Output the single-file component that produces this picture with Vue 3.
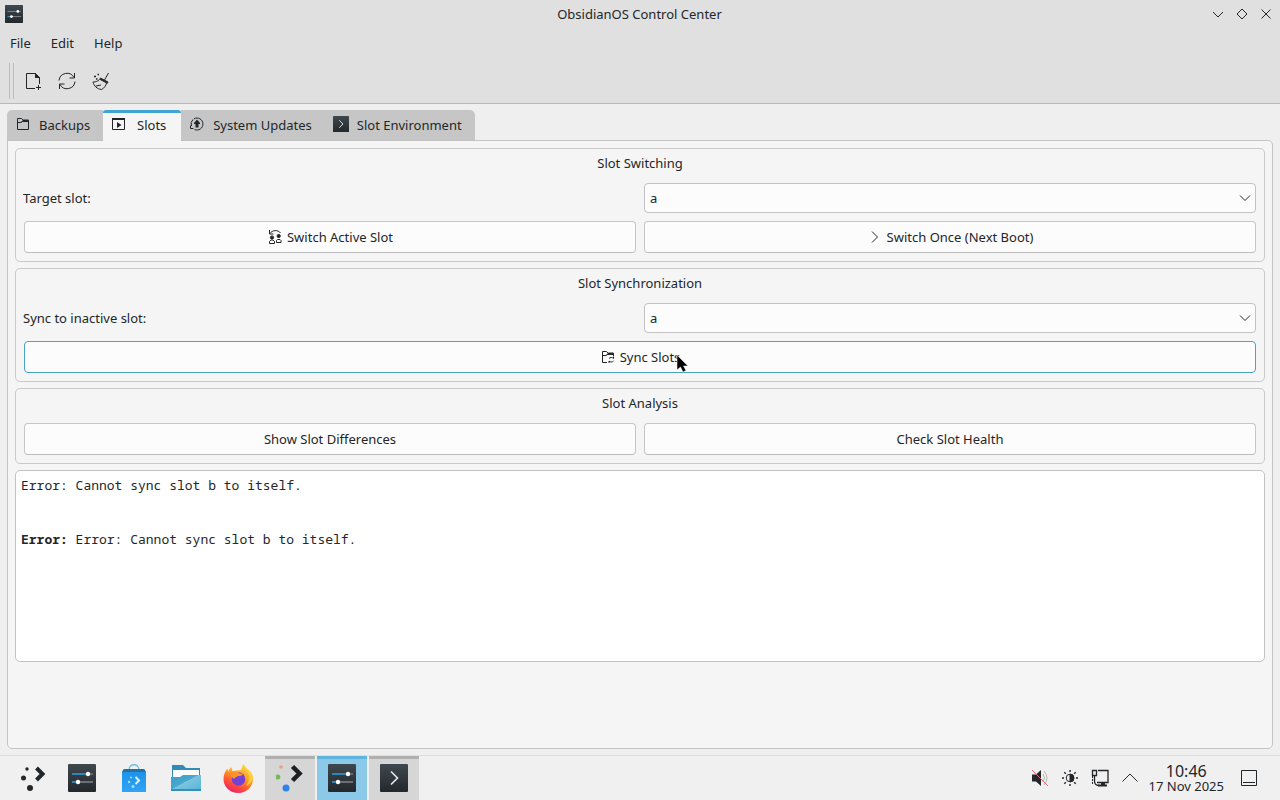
<script setup>
import { ref } from 'vue'

const menus = ['File', 'Edit', 'Help']
const tabs = [
  { id: 'backups', label: 'Backups' },
  { id: 'slots', label: 'Slots' },
  { id: 'updates', label: 'System Updates' },
  { id: 'environment', label: 'Slot Environment' },
]
const activeTab = ref('slots')
const slotNames = ['a', 'b']
const targetSlot = ref('a')
const syncSlot = ref('a')
</script>

<template>
  <div class="desktop">
    <svg class="defs" aria-hidden="true">
      <defs>
        <linearGradient id="dark" x1="0" y1="0" x2="0" y2="1">
          <stop offset="0" stop-color="#3f484f" />
          <stop offset="1" stop-color="#24282c" />
        </linearGradient>
        <linearGradient id="bag" x1="0" y1="0" x2="0" y2="1">
          <stop offset="0" stop-color="#1d8fe8" />
          <stop offset="1" stop-color="#2fa5f5" />
        </linearGradient>
        <linearGradient id="folder" x1="0" y1="0" x2="1" y2="1">
          <stop offset="0" stop-color="#3b9dc6" />
          <stop offset="0.45" stop-color="#48a9cf" />
          <stop offset="0.46" stop-color="#7cc4e0" />
          <stop offset="1" stop-color="#55b3d8" />
        </linearGradient>
        <linearGradient id="fox" x1="0.8" y1="0" x2="0.3" y2="1">
          <stop offset="0" stop-color="#ffe04a" />
          <stop offset="0.45" stop-color="#ff9a22" />
          <stop offset="0.75" stop-color="#ff4a3d" />
          <stop offset="1" stop-color="#e8246f" />
        </linearGradient>
        <symbol id="settings" viewBox="0 0 28 28">
          <rect width="28" height="28" rx="1" fill="url(#dark)" />
          <path d="M4 10h16" stroke="#2f9bd0" stroke-width="1.6" />
          <path d="M20 10h5" stroke="#737b80" stroke-width="1.4" />
          <path d="M4 18h6" stroke="#2f9bd0" stroke-width="1.6" />
          <path d="M10 18h15" stroke="#858c91" stroke-width="1.4" />
          <circle cx="20" cy="10" r="2.2" fill="#fff" />
          <circle cx="10" cy="18" r="2.2" fill="#fff" />
        </symbol>
        <symbol id="terminal" viewBox="0 0 28 28">
          <rect width="28" height="28" rx="1" fill="url(#dark)" />
          <path d="M11 7.500l6.500 6.500-6.500 6.500" fill="none" stroke="#e9ebec" stroke-width="1.600" />
        </symbol>
      </defs>
    </svg>

    <main class="window">
      <header class="header">
        <div class="titlebar">
          <svg class="app-icon" width="18" height="18"><use href="#settings" /></svg>
          <h1>ObsidianOS Control Center</h1>
          <div class="controls">
            <button type="button" aria-label="Minimize">
              <svg width="16" height="16" viewBox="0 0 16 16"><path d="M3 6l5 5 5-5" /></svg>
            </button>
            <button type="button" aria-label="Maximize">
              <svg width="16" height="16" viewBox="0 0 16 16"><path d="M8 3l5 5-5 5-5-5z" /></svg>
            </button>
            <button type="button" aria-label="Close">
              <svg width="16" height="16" viewBox="0 0 16 16"><path d="M3.500 3.500l9 9M12.500 3.500l-9 9" /></svg>
            </button>
          </div>
        </div>
        <nav class="menubar">
          <button v-for="m in menus" :key="m" type="button">{{ m }}</button>
        </nav>
        <div class="toolbar">
          <span class="grip"></span>
          <button type="button" aria-label="New">
            <svg width="22" height="22" viewBox="0 0 22 22"><path d="M13 18.500H4.500v-15h9l4 4V14M13.500 3.500v4h4M16.500 15v5M14 17.500h5" /><path d="M13.500 3.500l4 4h-4z" fill="#232629" /></svg>
          </button>
          <button type="button" aria-label="Refresh">
            <svg width="22" height="22" viewBox="0 0 22 22"><path d="M3 10.500a8 8 0 0 1 15-3M19 11.500a8 8 0 0 1-15 3M18.500 3v5h-5M3.500 19v-5h5" /></svg>
          </button>
          <button type="button" aria-label="Clean up">
            <svg width="22" height="22" viewBox="0 0 22 22"><path d="M18.500 3l-4 7M9.500 9.500c-2 2-4 2.500-6.500 2.500 1 4 4 7 8.500 7.500 3-1.500 4.500-4 5-6.500M6 16l5-1" /><path d="M10.500 8l7.500 4-.7 1.300-7.500-4z" fill="#232629" /><path d="M4 6.500h2M7.500 4.500h1.500M6 9h1.500" stroke-width="1.500" /></svg>
          </button>
        </div>
      </header>

      <div class="body">
        <div class="tabs" role="tablist">
          <button
            v-for="t in tabs"
            :id="'tab-' + t.id"
            :key="t.id"
            type="button"
            role="tab"
            class="tab"
            :class="{ active: activeTab === t.id }"
            :aria-selected="activeTab === t.id"
            @click="activeTab = t.id"
          >
            <svg v-if="t.id === 'backups'" width="16" height="16" viewBox="0 0 16 16"><path d="M2.500 13.500v-11h4l2 2h5v9zM2.500 6.500h4l2-2" /><path d="M6 6l2.500-2.500h5V6z" fill="#232629" stroke="none" /></svg>
            <svg v-else-if="t.id === 'slots'" width="16" height="16" viewBox="0 0 16 16"><path d="M1.500 3v10.500h12V3" /><path d="M1 2h13v2H1zM6 6l4.500 3L6 12z" fill="#232629" stroke="none" /></svg>
            <svg v-else-if="t.id === 'updates'" width="16" height="16" viewBox="0 0 16 16"><path d="M5 2.800a6 6 0 1 1 .5 10.700M4 3.500A6 6 0 0 0 2.500 10M1.500 9.500v3h3" /><path d="M8 3.500l3 3.500v1H9.500v3.500h-3V8H5V7z" fill="#232629" stroke="none" /></svg>
            <svg v-else width="16" height="16"><use href="#terminal" /></svg>
            <span>{{ t.label }}</span>
          </button>
        </div>

        <section class="pane" role="tabpanel" aria-labelledby="tab-slots">
          <section class="group">
            <h2>Slot Switching</h2>
            <div class="grid">
              <label for="target-slot">Target slot:</label>
              <div class="combo">
                <select id="target-slot" v-model="targetSlot">
                  <option v-for="s in slotNames" :key="s">{{ s }}</option>
                </select>
                <svg width="16" height="16" viewBox="0 0 16 16"><path d="M3 5.500l5 5 5-5" /></svg>
              </div>
              <button type="button" class="push">
                <svg width="16" height="16" viewBox="0 0 16 16"><path d="M2.500 1v4h4M3 4.500C5 1 11 .500 13.500 4M2.500 14.500v-2l1.500-1.500h2l1.500 1.500v2zM9.500 13.500v-2l1-1h2.500l1 1v2z" /><circle cx="5" cy="8.500" r="1.600" fill="#232629" /><circle cx="11.700" cy="7" r="1.600" fill="#232629" /></svg>
                <span>Switch Active Slot</span>
              </button>
              <button type="button" class="push">
                <svg width="16" height="16" viewBox="0 0 16 16"><path d="M5 2.500L10.500 8 5 13.500" /></svg>
                <span>Switch Once (Next Boot)</span>
              </button>
            </div>
          </section>

          <section class="group">
            <h2>Slot Synchronization</h2>
            <div class="grid">
              <label for="sync-slot">Sync to inactive slot:</label>
              <div class="combo">
                <select id="sync-slot" v-model="syncSlot">
                  <option v-for="s in slotNames" :key="s">{{ s }}</option>
                </select>
                <svg width="16" height="16" viewBox="0 0 16 16"><path d="M3 5.500l5 5 5-5" /></svg>
              </div>
              <button type="button" class="push wide hovered">
                <svg width="16" height="16" viewBox="0 0 16 16"><path d="M7 13.500H2.500v-11h4l2 2h5V7M2.500 6.500h4l2-2M9 9.500a3 3 0 0 1 4.500 0V7.500M13.500 12a3 3 0 0 1-4.500 0v2" /><path d="M6 6l2.500-2.500h5V6z" fill="#232629" stroke="none" /></svg>
                <span class="pointed">Sync Slots
                  <svg class="cursor" width="14" height="20" viewBox="0 0 14 20"><path d="M1 1v15l3.500-3 2.500 5 3-1.500-2.500-4.500H12z" /></svg>
                </span>
              </button>
            </div>
          </section>

          <section class="group">
            <h2>Slot Analysis</h2>
            <div class="grid">
              <button type="button" class="push">Show Slot Differences</button>
              <button type="button" class="push">Check Slot Health</button>
            </div>
          </section>

          <div class="output" role="log">
            <p>Error: Cannot sync slot b to itself.</p>
            <p><b>Error:</b> Error: Cannot sync slot b to itself.</p>
          </div>
        </section>
      </div>
    </main>

    <footer class="taskbar">
      <button type="button" class="task launcher" aria-label="Application Launcher">
        <svg width="28" height="28" viewBox="0 0 28 28"><g fill="#232629"><circle cx="9" cy="5" r="1.700" /><circle cx="5.500" cy="14" r="2.500" /><circle cx="12" cy="24" r="3" /></g><path d="M18.500 4l6 6-6 6" fill="none" stroke="#232629" stroke-width="4" /></svg>
      </button>
      <button type="button" class="task" aria-label="Control Center">
        <svg width="28" height="28"><use href="#settings" /></svg>
      </button>
      <button type="button" class="task" aria-label="Discover">
        <svg width="28" height="28" viewBox="0 0 28 28"><path d="M9 6c0-7 10-7 10 0" fill="none" stroke="#68bde9" stroke-width="1.300" /><path d="M4 5h20l2 3v20H2V8z" fill="url(#bag)" /><path d="M4 5h20l2 3H2z" fill="#23739f" /><path d="M15.500 13l3.500 3.500-3.500 3.500" fill="none" stroke="#d8f2ff" stroke-width="2" /><g fill="#a6e0ff"><circle cx="11" cy="13.500" r="1" /><circle cx="9" cy="18" r="1.200" /><circle cx="13" cy="22.500" r="1.500" /></g></svg>
      </button>
      <button type="button" class="task" aria-label="Files">
        <svg width="32" height="28" viewBox="0 0 32 28"><path d="M2 1h11l3 3h14v10H2z" fill="#2f8db5" /><path d="M3 6h26v10H3z" fill="#fcfcfc" /><path d="M1 13h9l3-2h18v16H1z" fill="url(#folder)" /><path d="M1 25h30v2H1z" fill="#368fb6" /></svg>
      </button>
      <button type="button" class="task" aria-label="Firefox">
        <svg width="32" height="32" viewBox="0 0 32 32"><path d="M21 2c2 2 3 3 3.500 5C29 9 31 13 31 17.500 30.500 25.500 24 31 16.500 31 8 31 1.500 25 1.500 17c0-4 1.500-8 4-10.500l.5 3L9 5l1.500 4L19 8c1-2 1.500-4 2-6z" fill="url(#fox)" /><circle cx="16.500" cy="17" r="6.800" fill="#7542d8" /><path d="M9 12c2-3 6-3 8-1l4 1c-1 2-3 2-5 2-1 1-3 1-4 3-1-1-3-2-3-5z" fill="#ff9226" /><path d="M21 2c1 3 3 5 5 9 2 4 1 9-2 13 5-2 7-6 7-9C30 9 24 7 21 2z" fill="#ffd83d" opacity=".8" /></svg>
      </button>
      <button type="button" class="task running" aria-label="Plasma Welcome">
        <svg width="28" height="28" viewBox="0 0 28 28"><circle cx="5" cy="3" r="1.800" fill="#e8a27c" /><circle cx="1.800" cy="13" r="2.500" fill="#6fbb56" /><circle cx="10" cy="24" r="3.500" fill="#2d84e8" /><path d="M16.500 2.500l7 7-7 7" fill="none" stroke="#1d1f20" stroke-width="4.500" /></svg>
      </button>
      <button type="button" class="task running current" aria-label="ObsidianOS Control Center">
        <svg width="28" height="28"><use href="#settings" /></svg>
      </button>
      <button type="button" class="task running" aria-label="Terminal">
        <svg width="28" height="28"><use href="#terminal" /></svg>
      </button>

      <div class="tray">
        <button type="button" aria-label="Muted">
          <svg width="22" height="22" viewBox="0 0 22 22"><path d="M3 7.500h4v7H3zM7 7.500L12 3v16l-5-4.500z" fill="#232629" stroke="none" /><path d="M14 7q3 4 0 8M15 4q6 7 0 14" stroke="#b5b5b5" /><path d="M3 3l16 16" stroke="#da6b7b" /></svg>
        </button>
        <button type="button" aria-label="Brightness">
          <svg width="22" height="22" viewBox="0 0 22 22"><circle cx="11" cy="11" r="3.800" /><path d="M11 7a4 4 0 0 1 0 8z" fill="#232629" /><path d="M11 3v2M11 17v2M3 11h2M17 11h2M5.300 5.300l1.500 1.500M15.200 15.200l1.500 1.500M5.300 16.700l1.500-1.500M15.200 6.800l1.500-1.500" stroke-width="1.400" /></svg>
        </button>
        <button type="button" aria-label="Network">
          <svg width="22" height="22" viewBox="0 0 22 22"><path d="M9 3.500h10v12H8M3.500 3.500h4v5h-4zM5.500 9v5q0 4.500 4.500 4.500" stroke-width="1.300" /><path d="M3.500 9v8" stroke-dasharray="2 1" /><path d="M9 17.500h9v2H9zM12 15h4v3h-4z" fill="#232629" stroke="none" /></svg>
        </button>
        <button type="button" aria-label="Show hidden icons">
          <svg width="22" height="22" viewBox="0 0 22 22"><path d="M3.500 14.500L11 7l7.500 7.500" /></svg>
        </button>
      </div>
      <div class="clock">
        <time class="time">10:46</time>
        <span class="date">17 Nov 2025</span>
      </div>
      <button type="button" class="peek" aria-label="Peek at Desktop">
        <svg width="22" height="22" viewBox="0 0 22 22"><path d="M3.500 3.500h15v15h-15zM5 15.500h12" /></svg>
      </button>
    </footer>
  </div>
</template>

<style>
body {
  background: #efefef;
}
</style>

<style scoped>
.desktop {
  display: flex;
  flex-direction: column;
  min-height: 100vh;
  background: #efefef;
  color: #232629;
  font: 13px/18px "Noto Sans", sans-serif;
}
.desktop *,
.desktop {
  box-sizing: border-box;
}
.defs {
  position: absolute;
  width: 0;
  height: 0;
}
button {
  display: flex;
  align-items: center;
  justify-content: center;
  margin: 0;
  padding: 0;
  border: 0;
  background: none;
  color: inherit;
  font: inherit;
}
svg {
  display: block;
  flex: none;
  fill: none;
  stroke: #232629;
}
use,
.task svg {
  stroke: none;
}
h1,
h2,
p {
  margin: 0;
  font: inherit;
}
.window {
  display: flex;
  flex: 1;
  flex-direction: column;
}
.header {
  background: #e0e0e0;
  border-bottom: 1px solid #b9b9b9;
}
.titlebar {
  display: grid;
  grid-template-columns: 1fr auto 1fr;
  align-items: center;
  height: 28px;
  padding: 0 6px 0 5px;
}
.controls {
  display: flex;
  justify-content: flex-end;
  gap: 8px;
}
.menubar {
  display: flex;
  height: 30px;
}
.menubar button {
  padding: 0 10px;
}
.toolbar {
  display: flex;
  align-items: center;
  height: 45px;
  padding-left: 9px;
}
.toolbar button {
  width: 34px;
  height: 34px;
}
.grip {
  width: 5px;
  height: 36px;
  margin-right: 2px;
  border: solid #bdbdbd;
  border-width: 0 1px;
}
.body {
  display: flex;
  flex: 1;
  flex-direction: column;
  padding: 6px 7px;
}
.tabs {
  display: flex;
  z-index: 1;
}
.tab {
  gap: 8px;
  min-width: 78px;
  height: 31px;
  padding: 0 13px 2px 8px;
  border-bottom: 1px solid #c0c0c0;
  background: #c6c6c6;
}
.tab:first-child {
  border-top-left-radius: 5px;
}
.tab:last-child {
  border-top-right-radius: 5px;
}
.tab span {
  flex: 1;
  padding-top: 2px;
}
.tab.active {
  border-top: 3px solid #3fa4d4;
  border-bottom: 0;
  border-radius: 3px 3px 0 0;
  background: #f5f5f5;
  padding-bottom: 6px;
}
.pane {
  display: flex;
  flex: 1;
  flex-direction: column;
  gap: 6px;
  margin-top: -1px;
  padding: 7px;
  border: 1px solid #c4c4c4;
  border-radius: 0 5px 5px 5px;
  background: #f5f5f5;
}
.group {
  padding: 5px 8px 8px;
  border: 1px solid #c9c9c9;
  border-radius: 5px;
}
.group h2 {
  margin-bottom: 11px;
  text-align: center;
}
.grid {
  display: grid;
  grid-template-columns: 1fr 1fr;
  gap: 8px;
  align-items: center;
}
.grid label {
  margin-left: -1px;
}
.combo {
  position: relative;
}
.combo select {
  display: block;
  width: 100%;
  height: 30px;
  padding: 0 24px 0 5px;
  border: 1px solid #c2c2c2;
  border-radius: 4px;
  background: #fcfcfc;
  color: inherit;
  font: inherit;
  appearance: none;
}
.combo svg {
  position: absolute;
  top: 7px;
  right: 3px;
  pointer-events: none;
}
.push {
  gap: 4px;
  height: 32px;
  border: 1px solid #c6c6c6;
  border-bottom-color: #bcbcbc;
  border-radius: 4px;
  background: #fcfcfc;
}
.push.wide {
  grid-column: 1 / -1;
}
.push.hovered {
  border-color: #4ba3c5;
}
.pointed {
  position: relative;
}
.cursor {
  position: absolute;
  top: 6px;
  right: -10px;
}
.cursor path {
  fill: #000;
  stroke: #fff;
  stroke-width: 0.5;
}
.output {
  min-height: 192px;
  padding: 5px;
  border: 1px solid #c2c2c2;
  border-radius: 5px;
  background: #fff;
  font-family: "Noto Sans Mono", "DejaVu Sans Mono", monospace;
}
.output p + p {
  margin-top: 36px;
}
.taskbar {
  display: flex;
  gap: 2px;
  height: 45px;
  padding: 0 20px 0 9px;
  border-top: 1px solid #dedede;
  background: #f0f0f0;
}
.task {
  width: 50px;
  border-top: 3px solid transparent;
  padding-bottom: 4px;
}
.launcher {
  width: 46px;
}
.running {
  border-color: #b0b0b0;
  background: #d6d6d6;
}
.current {
  border-color: #5fb4de;
  background: #8cc9e9;
}
.tray {
  display: flex;
  gap: 8px;
  margin-left: auto;
}
.clock {
  display: flex;
  flex-direction: column;
  align-items: center;
  justify-content: center;
  margin: 0 12px 0 6px;
}
.time {
  font-size: 16px;
  line-height: 16px;
}
.date {
  line-height: 14px;
}
</style>
